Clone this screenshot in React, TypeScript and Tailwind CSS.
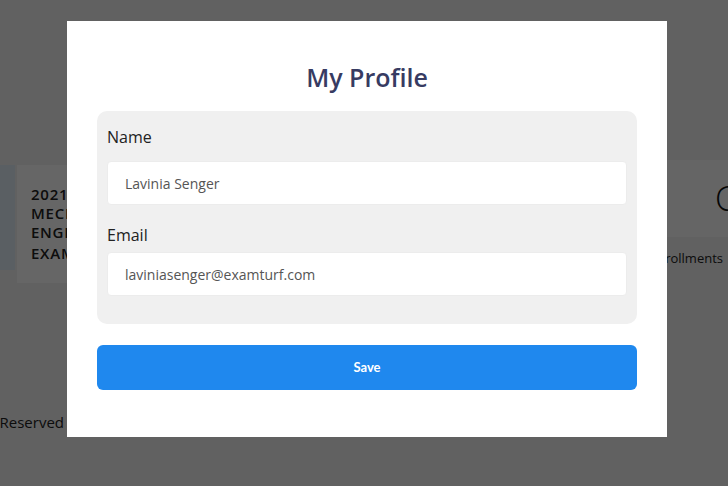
import React from 'react';

function PageBehind() {
    return (
        <div className="flex flex-col pt-[160px] font-['Open_Sans',sans-serif]">
            <div className="flex items-start">
                <div className="mt-[5px] h-[105px] w-[15px] bg-[#e2eef8]" />
                <div className="ml-[2px] mt-[5px] h-[118px] w-[300px] bg-white pl-[14px] pt-[20px] text-[15px] font-semibold leading-[19px] tracking-wider text-[#222]">
                    <div>2021 GATE</div>
                    <div>MECHANICAL</div>
                    <div>ENGINEERING</div>
                    <div className="mt-[2px]">EXAM</div>
                </div>
                <div className="ml-[350px] flex w-[61px] flex-col">
                    <div className="flex h-[77px] items-center justify-end overflow-visible whitespace-nowrap bg-[#fdfdfd] text-[34px] font-light text-[#111]">
                        <span className="-mr-[8px]">C</span>
                    </div>
                    <div className="mt-[12px] flex justify-end whitespace-nowrap pr-[5px] text-[13px] text-[#222]">
                        Total Enrollments
                    </div>
                </div>
            </div>
            <div className="mt-[128px] flex w-[64px] justify-end whitespace-nowrap text-[15px] text-[#222]">
                © 2021 All Rights Reserved
            </div>
        </div>
    );
}

function ProfileModal() {
    return (
        <div className="ml-[67px] mt-[21px] h-[416px] w-[600px] bg-white px-[30px] pt-[40px] font-['Open_Sans',sans-serif]">
            <h2 className="text-center text-[25px] font-semibold leading-[32px] text-[#373b62]">My Profile</h2>
            <div className="mt-[18px] rounded-[10px] bg-[#f0f0f0] px-[10px] pb-[28px] pt-[16px]">
                <label className="block text-[16px] leading-[20px] text-[#222]">Name</label>
                <input
                    readOnly
                    value="Lavinia Senger"
                    className="mt-[14px] block h-[44px] w-full rounded-[4px] border border-[#ececec] bg-white px-[17px] text-[14px] text-[#555] outline-none"
                />
                <label className="mt-[20px] block text-[16px] leading-[20px] text-[#222]">Email</label>
                <input
                    readOnly
                    value="laviniasenger@examturf.com"
                    className="mt-[7px] block h-[44px] w-full rounded-[4px] border border-[#ececec] bg-white px-[17px] text-[14px] text-[#555] outline-none"
                />
            </div>
            <button className="mt-[21px] flex h-[45px] w-full items-center justify-center rounded-[6px] bg-[#1f88ee] font-['Lato',sans-serif] text-[13px] font-bold text-white">
                Save
            </button>
        </div>
    );
}

export default function App() {
    return (
        <div className="relative h-[486px] w-[728px] overflow-hidden bg-[#f2f2f2]">
            <PageBehind />
            <div className="absolute inset-0 bg-black/60">
                <ProfileModal />
            </div>
        </div>
    );
}
